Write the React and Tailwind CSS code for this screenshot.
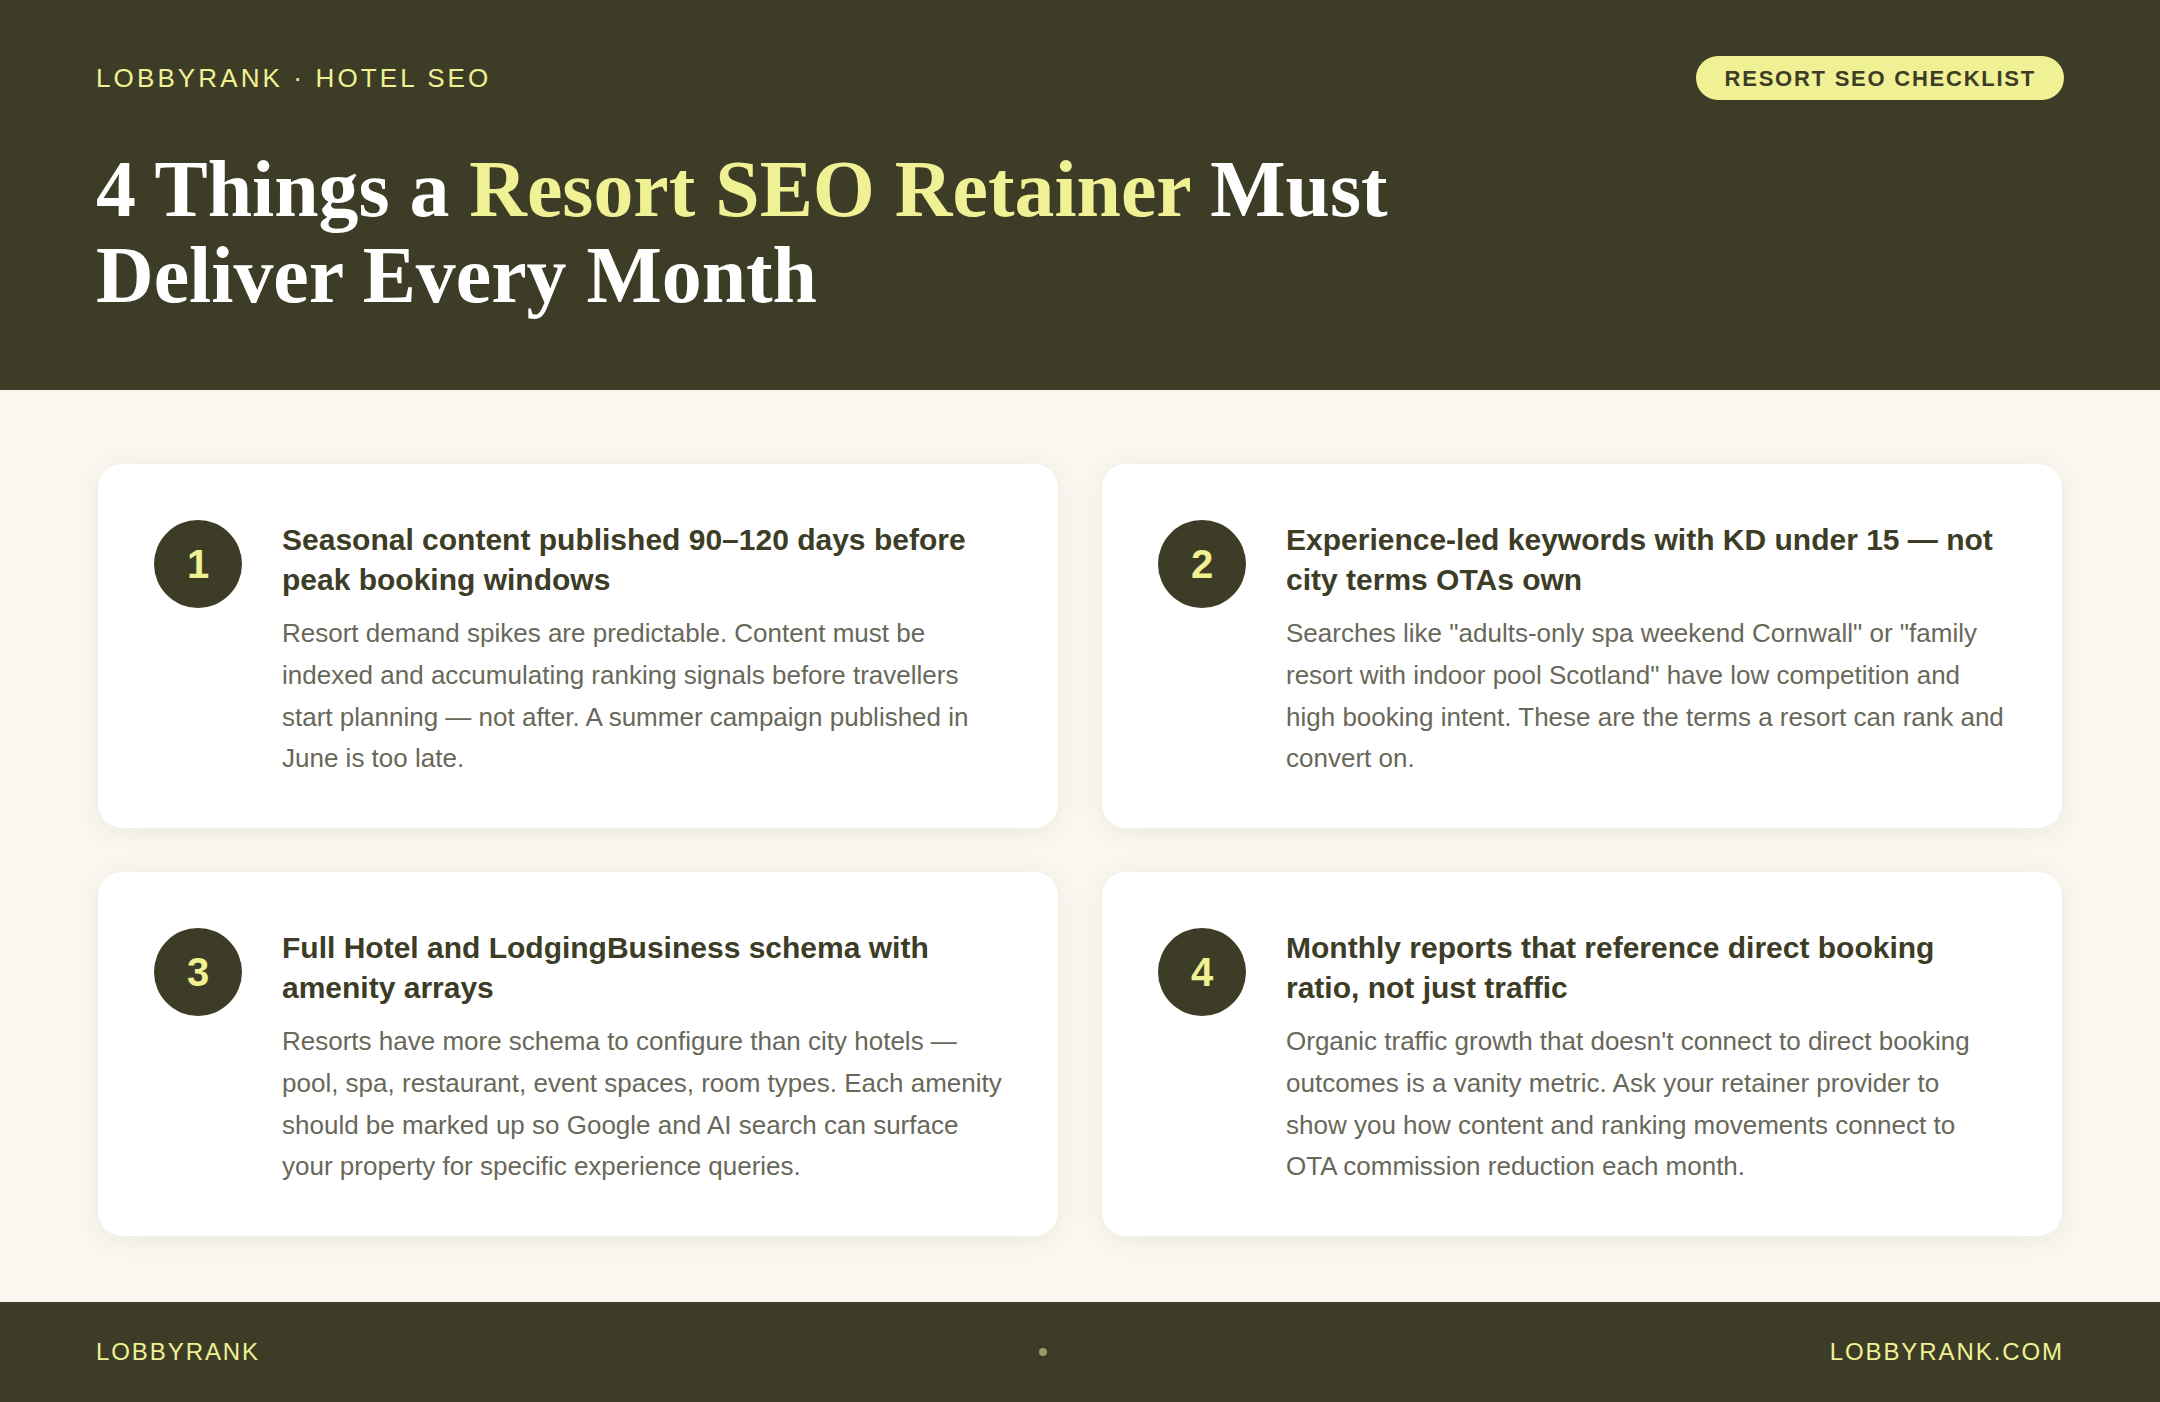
const cards = [
  {
    n: 1,
    title: 'Seasonal content published 90–120 days before peak booking windows',
    body: 'Resort demand spikes are predictable. Content must be indexed and accumulating ranking signals before travellers start planning — not after. A summer campaign published in June is too late.',
  },
  {
    n: 2,
    title: 'Experience-led keywords with KD under 15 — not city terms OTAs own',
    body: 'Searches like "adults-only spa weekend Cornwall" or "family resort with indoor pool Scotland" have low competition and high booking intent. These are the terms a resort can rank and convert on.',
  },
  {
    n: 3,
    title: 'Full Hotel and LodgingBusiness schema with amenity arrays',
    body: 'Resorts have more schema to configure than city hotels — pool, spa, restaurant, event spaces, room types. Each amenity should be marked up so Google and AI search can surface your property for specific experience queries.',
  },
  {
    n: 4,
    title: 'Monthly reports that reference direct booking ratio, not just traffic',
    body: "Organic traffic growth that doesn't connect to direct booking outcomes is a vanity metric. Ask your retainer provider to show you how content and ranking movements connect to OTA commission reduction each month.",
  },
];

const App = () => {
  return (
    <div className="w-[2160px] h-[1402px] flex flex-col bg-[#faf7f0] font-['Liberation_Sans',Arial,sans-serif] overflow-hidden">
      {/* Header */}
      <header className="h-[390px] shrink-0 bg-[#3d3d27] px-[96px] pt-[56px]">
        <div className="flex items-center justify-between h-[44px]">
          <span className="text-[26px] tracking-[0.12em] text-[#f0f094]">LOBBYRANK · HOTEL SEO</span>
          <span className="h-[44px] flex items-center rounded-full bg-[#f0f094] pl-[29px] pr-[28px] text-[22px] font-bold tracking-[0.08em] text-[#3d3d27]">
            RESORT SEO CHECKLIST
          </span>
        </div>
        <h1 className="mt-[46px] w-[1400px] font-['Liberation_Serif',Georgia,serif] text-[79.8px] leading-[86px] font-bold text-white">
          4 Things a <span className="text-[#f0f094]">Resort SEO Retainer</span> Must
          <br />
          Deliver Every Month
        </h1>
      </header>

      {/* Cards */}
      <main className="flex-1 px-[98px] pt-[74px]">
        <div className="grid grid-cols-2 gap-[44px]">
          {cards.map((card) => (
            <div
              key={card.n}
              className="h-[364px] flex gap-[40px] rounded-[24px] bg-white pt-[56px] px-[56px] shadow-[0_4px_24px_rgba(61,61,39,0.08)]"
            >
              <div className="w-[88px] h-[88px] shrink-0 rounded-full bg-[#3d3d27] flex items-center justify-center text-[40px] font-bold text-[#f0f094]">
                {card.n}
              </div>
              <div>
                <h3 className="text-[30px] leading-[40px] font-bold text-[#3d3d27]">{card.title}</h3>
                <p className="mt-[13px] text-[26px] leading-[41.8px] text-[#68685a]">{card.body}</p>
              </div>
            </div>
          ))}
        </div>
      </main>

      {/* Footer */}
      <footer className="h-[100px] shrink-0 bg-[#3d3d27] px-[96px] flex items-center justify-between">
        <span className="text-[24px] tracking-[0.08em] text-[#f0f094]">LOBBYRANK</span>
        <span className="w-[8px] h-[8px] mr-[3px] rounded-full bg-[#9a9a64]" />
        <span className="text-[24px] tracking-[0.08em] text-[#f0f094]">LOBBYRANK.COM</span>
      </footer>
    </div>
  );
};

export default App;
